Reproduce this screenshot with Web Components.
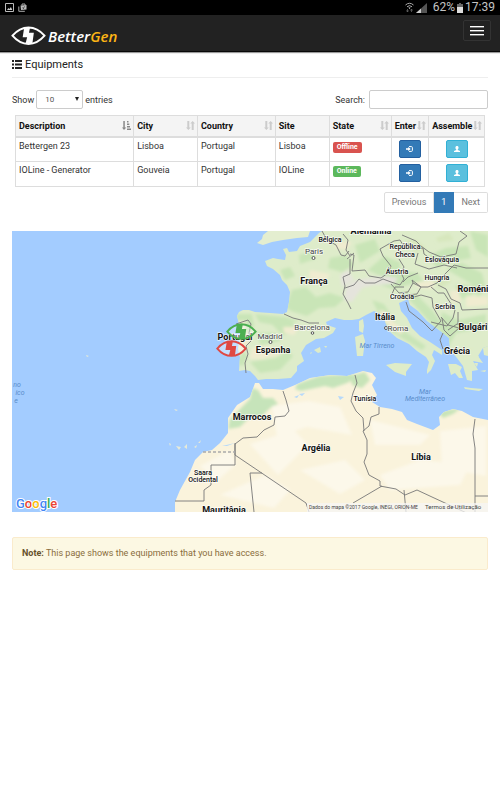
<!DOCTYPE html>
<html lang="en">
<head>
<meta charset="utf-8">
<meta name="viewport" content="width=device-width, initial-scale=1">
<title>BetterGen - Equipments</title>
<style>
  body { margin: 0; background: #fff; color: #333; font: 9px/12px Roboto, "Liberation Sans", sans-serif; }
  main { padding: 0 12px; }
</style>
</head>
<body>
<status-bar></status-bar>
<app-navbar></app-navbar>
<main>
  <page-heading>Equipments</page-heading>
  <table-controls></table-controls>
  <equipment-table></equipment-table>
  <page-list></page-list>
  <equipment-map></equipment-map>
  <note-box><b>Note:</b> This page shows the equipments that you have access.</note-box>
</main>
<script>
const define = (name, markup) => {
  const template = document.createElement('template');
  template.innerHTML = markup;
  customElements.define(name, class extends HTMLElement {
    constructor() {
      super();
      this.attachShadow({ mode: 'open' }).append(template.content.cloneNode(true));
    }
  });
};

define('status-bar', `
<style>
  :host { display: flex; align-items: center; height: 15px; padding: 0 5px; background: #000; color: #c4c4c4; font-size: 12px; line-height: 15px; }
  svg { display: block; }
  .left, .right { display: flex; align-items: center; gap: 4px; }
  .right { margin-left: auto; gap: 2px; }
  .level { margin-left: 4px; }
</style>
<div class="left">
  <svg width="9" height="9" viewBox="0 0 9 9"><path d="M.5.5h8v8h-8z" fill="none" stroke="#bbb"/><path d="M2 7l1.5-2 1 1 1.4-2L7.300 7z" fill="#ccc"/></svg>
  <svg width="9" height="9" viewBox="0 0 9 9"><path d="M2.500 2.500L8.500 2v4.500L3 7z" fill="#bbb"/><path d="M4 2.500V1h3v1.300M.8 3.500V8.300h6" fill="none" stroke="#aaa"/><path d="M4.500 4.500L6 5.500M6.700 3.300L5 6" stroke="#333" stroke-width=".7"/></svg>
</div>
<div class="right">
  <svg width="9" height="11" viewBox="0 0 9 11"><path d="M.5 3Q4.500-.5 8.500 3M2 4.800Q4.500 2.500 7 4.800" fill="none" stroke="#aaa"/><path d="M3.500 5.500h2L4.500 7z" fill="#fff"/><path d="M2.500 7v3M1.500 8.500l1 1.500 1-1.500M6.500 10V7M5.500 8.500l1-1.500 1 1.500" fill="none" stroke="#666" stroke-width=".8"/></svg>
  <svg width="11" height="10" viewBox="0 0 11 10"><path d="M0 10L11 0v10z" fill="#555"/><path d="M0 10l5-4.500V10z" fill="#ccc"/></svg>
  <span class="level">62%</span>
  <svg width="6" height="10" viewBox="0 0 6 10"><path d="M0 1h2V0h2v1h2v9H0z" fill="#666"/><path d="M0 4h6v6H0z" fill="#ddd"/></svg>
  <span>17:39</span>
</div>`);

define('bolt-eye', `
<style>:host { display: block; } svg { display: block; width: 100%; }</style>
<svg viewBox="0 0 36 20" fill="none" stroke="currentColor"><path d="M1.500 10C7 3.500 12 1.500 18 1.500S29 3.500 34.500 10C29 16.500 24 18.500 18 18.500S7 16.500 1.500 10z" stroke-width="2"/><path d="M13.500 2h6l-1 5h5L22 18h-7l1.600-6.300H12z" fill="currentColor" stroke="none"/></svg>`);

define('app-navbar', `
<style>
  :host { display: flex; align-items: center; justify-content: space-between; height: 36px; padding: 0 9px 0 11px; background: #222; border-bottom: 1px solid #080808; box-shadow: 0 1px 1px #999; }
  a { display: flex; align-items: center; gap: 2px; padding-top: 6px; color: #fff; text-decoration: none; font: italic 600 15px/20px "Open Sans", "Noto Sans", sans-serif; }
  bolt-eye { width: 35px; }
  span span { color: #fdb515; }
  button { display: flex; flex-direction: column; gap: 3px; margin-bottom: 6px; padding: 5px 6px; background: none; border: 1px solid #333; border-radius: 2px; }
  i { width: 14px; height: 1px; background: #fff; box-shadow: 0 1px #777; }
</style>
<a href="#"><bolt-eye></bolt-eye><span>Better<span>Gen</span></span></a>
<button type="button" aria-label="Toggle navigation"><i></i><i></i><i></i></button>`);

define('page-heading', `
<style>
  :host { display: block; border-bottom: 1px solid #eee; color: #222; }
  h1 { display: flex; align-items: center; gap: 3px; margin: 0; padding: 5px 0 5px; font: 400 11px/15px Roboto, sans-serif; }
</style>
<h1><svg width="10" height="9" viewBox="0 0 10 9" fill="#222"><path d="M0 0h2v2H0zM3 0h7v2H3zM0 3.500h2v2H0zM3 3.500h7v2H3zM0 7h2v2H0zM3 7h7v2H3z"/></svg><span><slot></slot></span></h1>`);

define('table-controls', `
<style>
  :host { display: flex; justify-content: space-between; padding-top: 12px; }
  div { display: flex; align-items: center; gap: 2px; }
  .search { gap: 4px; }
  select, input { box-sizing: border-box; height: 19px; margin: 0; border: 1px solid #ccc; border-radius: 2px; background: #fff; color: #555; font: 8px/12px Roboto, sans-serif; }
  .pick { position: relative; display: block; }
  select { width: 47px; padding: 0 8px; appearance: none; }
  svg { position: absolute; right: 4px; top: 7px; pointer-events: none; }
  input { width: 119px; padding: 0 4px; }
</style>
<div><label for="length">Show</label><span class="pick"><select id="length"><option>10</option><option>25</option><option>50</option></select><svg width="4" height="4" viewBox="0 0 4 4"><path d="M0 0h4L2 4z" fill="#222"/></svg></span><label for="length">entries</label></div>
<div class="search"><label for="search">Search:</label><input id="search" type="search"></div>`);

define('sort-icon', `
<style>:host { display: block; } svg { display: block; } .asc { display: none; } :host([asc]) .asc { display: block; } :host([asc]) .both { display: none; }</style>
<svg class="both" width="9" height="9" viewBox="0 0 9 9" fill="#ccc"><path d="M1.300 0h2v6.500h1.500L2.300 9 0 6.500h1.300zM5.700 9h2V2.500H9L6.700 0 4.200 2.500h1.500z"/></svg>
<svg class="asc" width="9" height="9" viewBox="0 0 9 9" fill="#888"><path d="M1.300 0h1.500v6.500h1.500L2 9 0 6.500h1.300zM5 0h1.500v1.500H5zM5 2.500h2.300V4H5zM5 5h3v1.500H5zM5 7.500h4V9H5z"/></svg>`);

const head = (text, asc = '') => `<th scope="col"><div><span>${text}</span><sort-icon ${asc}></sort-icon></div></th>`;
const row = (name, city, site, state) => `<tr><td>${name}</td><td>${city}</td><td>Portugal</td><td>${site}</td>
  <td><mark class="${state.toLowerCase()}">${state}</mark></td>
  <td class="act"><button type="button" class="enter" aria-label="Enter ${name}"><svg width="7" height="6" viewBox="0 0 7 6"><path d="M3 .6h2.400q1 0 1 1v2.800q0 1-1 1H3" fill="none" stroke="#fff"/><path d="M0 2.200h2.200V1L4.700 3 2.200 5V3.800H0z" fill="#fff"/></svg></button></td>
  <td class="act"><button type="button" class="assemble" aria-label="Assemble ${name}"><svg width="6" height="6" viewBox="0 0 6 6" fill="#fff"><path d="M3 0c2 0 1.800 2.500.8 3.300v.8L6 5v1H0V5l2.200-.9v-.8C1.200 2.500 1 0 3 0z"/></svg></button></td></tr>`;

define('equipment-table', `
<style>
  :host { display: block; padding: 6px 3px 0; }
  table { width: 100%; table-layout: fixed; border-collapse: collapse; border: 1px solid #ddd; }
  th, td { box-sizing: border-box; padding: 0 3px; border: 1px solid #ddd; text-align: left; font-weight: 400; }
  th { height: 21px; padding-right: 2px; background: #f4f4f4; border-bottom-width: 2px; color: #111; font-weight: 700; }
  th div { display: flex; align-items: center; justify-content: space-between; white-space: nowrap; }
  td { height: 25px; padding-top: 2px; padding-bottom: 4px; vertical-align: top; }
  .act { padding: 2px 0 3px; text-align: center; }
  mark { display: inline-block; padding: 0 4px; border-radius: 2px; color: #fff; font-size: 7px; font-weight: 700; line-height: 11px; }
  .offline { background: #d9534f; } .online { background: #5cb85c; }
  button { display: inline-flex; align-items: center; justify-content: center; box-sizing: border-box; width: 22px; height: 18px; padding: 0; border: 1px solid #2360a0; border-radius: 2px; background: #337ab7; vertical-align: top; }
  .assemble { background: #5bc0de; border-color: #31b0d5; }
</style>
<table>
  <colgroup><col style="width:25.200%"><col style="width:13.600%"><col style="width:16.600%"><col style="width:11.500%"><col style="width:13.200%"><col style="width:8%"><col></colgroup>
  <thead><tr>${head('Description', 'asc')}${head('City')}${head('Country')}<th scope="col">Site</th>${head('State')}${head('Enter')}${head('Assemble')}</tr></thead>
  <tbody>${row('Bettergen 23', 'Lisboa', 'Lisboa', 'Offline')}${row('IOLine - Generator', 'Gouveia', 'IOLine', 'Online')}</tbody>
</table>`);

define('page-list', `
<style>
  :host { display: block; padding-top: 5px; }
  nav { display: flex; justify-content: flex-end; }
  a { padding: 4px 7px; border: 1px solid #ddd; border-left-width: 0; color: #777; text-decoration: none; line-height: 11px; }
  a:first-child { border-left-width: 1px; border-radius: 2px 0 0 2px; }
  a:last-child { border-radius: 0 2px 2px 0; }
  .on { background: #337ab7; border-color: #337ab7; color: #fff; }
</style>
<nav aria-label="Pages"><a href="#">Previous</a><a href="#" class="on" aria-current="page">1</a><a href="#">Next</a></nav>`);

/* Map geometry is kept in one shared coordinate space; labels are placed over the land shapes. */
const label = (x, y, text, kind = '') => `<text x="${x}" y="${y}" class="${kind}">${text}</text>`;
const eye = (x, y, color) => `<g transform="translate(${x} ${y}) scale(.86)" fill="none" stroke="${color}"><path d="M1.500 10C7 3.500 12 1.500 18 1.500S29 3.500 34.500 10C29 16.500 24 18.500 18 18.500S7 16.500 1.500 10z" fill="#fff" fill-opacity=".35" stroke-width="2.200"/><path d="M12.500 2h7l-1 5h5L22 18h-7l1.600-6.300H11z" fill="${color}" stroke="none"/></g>`;
define('equipment-map', `
<style>
  :host { display: block; padding-top: 18px; }
  svg { display: block; width: 100%; }
  text { font: 700 9px Roboto, sans-serif; fill: #111; text-anchor: middle; paint-order: stroke; stroke: #fff; stroke-width: 1.500px; stroke-opacity: .75; }
  .s { font-size: 7px; font-weight: 500; }
  .c { font-size: 8px; font-weight: 400; fill: #444; }
  .w { font-size: 7px; font-weight: 400; font-style: italic; fill: #5a8ccb; stroke: none; }
  .t { font-size: 6px; font-weight: 400; fill: #444; stroke: none; text-anchor: start; }
  .d { font-size: 5px; }
  .g { font: 500 13px Roboto, sans-serif; text-anchor: start; stroke-width: 2px; stroke-opacity: 1; }
</style>
<svg viewBox="12 231 476 281" role="img" aria-label="Map of equipments">
<defs>
<clipPath id="eu"><path id="eup" d="M322 231l-3 2-4 4-5 5-10 4-3 5-8 1-2-4-4 1 3 6-1 5-7-1-5-1-8 3 2 5 6 3 7 6 2 5 5 5 3 7-1 10-2 10-4 2-13-1-15-1-6-2-6 0-4 2-2 4 2 8 2 7-1 6-2 12 2 8-1 14 6-1 5 1 5 5 3 4 8-1 12 0 13-1 6-7 0-5 7-5-3-8 5-8 10-6 8-1 9-5 3-5-9-3-1-3 9-4 9 2 8 0 7-1 7-4 8-4 6 3 4 4 2 6 3 7 8 7 12 6 8 7 9 6 3 5-2 8 0 4 4-4 4-9-3-6 2-5 8 5 0-5-12-8-10-6-8-8-5-10-6-7-2-8 9-4 2 6 8 6 9 10 16 12 6 5 1 12 7 8 6 8 4 14 5 1 0-10 6-1-5-9 10 2-5-7 5-8 6-2 8 0 6-3V231z"/></clipPath>
<clipPath id="af"><path id="afp" d="M175 512v-10l5-12 10-18 5-12 8-8 9-2 8-7 8-10 0-15 9-13 13-8 5-14 4 0 4 6 10 0 10 1 12-5 15-7 20-3 17 1 16-5 9 2 4 5-4 7 5 10-5 7 8 5 12 2 10 3 5 8 10 4 16 6 7-5-1-8 5-5 9-3 9 2 11 6 15 3V512z"/></clipPath>
<filter id="soft"><feGaussianBlur stdDeviation="1.500"/></filter>
</defs>
<path fill="#a3ccff" d="M12 231h476v281H12z"/>
<path fill="#e4eed0" d="M257 243l5-4 1-4 5-4h42l-2 6-11 1-14 2-11 2-9 3z"/>
<use href="#eup" fill="#deecca"/><use href="#afp" fill="#faf3dc"/>
<g clip-path="url(#eu)"><g filter="url(#soft)">
<path fill="#c9e5b7" d="M292 290l14-3 10 10 14-4 15 5-10 9-16 1-12 8-16-5-5-4zM299 255l14-4 2 8-15 5zM330 258l16-3 8 10-12 7-14-4zM280 270l10-3 5 9-10 4zM236 314l16 0 2 12-8 14-8-6zM255 314l30 3 14 4-20 5-20-4zM272 324l20-2 6 10-16 3zM256 333l20 0 5 8-20 4zM239 348l9 8-5 10-7-2zM250 362l26-4 12-8 5 6-13 14-20 3zM355 245l20-6 5 12-20 12zM384 256l16 6 0 8-20 6-12-6zM386 270l32 3 5 8-30 8-18-6zM400 290l18 6 15 15 12 16-8 3-22-24zM372 300l12 4 14 22 16 12 12 8-4 4-20-12-16-10zM428 256l18-8 22-2 3 12-22 4-12 6zM446 269l16-6 20 10 4 16-8 8-8-14-14-8zM442 312l16 8 10-2 18-4v14l-30 5-8 15-9-8zM455 285l14 0 6 8-15 7zM470 231l18 4v22l-12-7z"/>
<path fill="#f0ecd0" d="M238 321l8 0-1 12 8 1-6 12-9 12zM252 348l18-2 12 8-20 5-13 0zM283 327l17 0-6 8-10-2zM310 270l20 4-5 9-16-5zM338 242l14 0-6 8-12-2zM379 310l5 1 20 21-4 2-15-11zM450 291l8-1 4 11-10 2zM466 296l22 1v8l-22 2zM414 283l24-4-6 10-13-1z"/>
<path fill="#e5e4dc" d="M346 286l10-6 14-2 16-2 12 2-4 6-20 1-12 3-10 14-8-2zM340 275l8-5 6 10-12 7z"/>
<path fill="#d7e7bd" d="M404 240l12 0 10 8-10 5zM436 238l13-5 5 7-16 2zM430 278l12-2 10 5-12 8z"/>
</g></g>
<g clip-path="url(#af)"><g filter="url(#soft)">
<path fill="#c6e4ba" d="M252 388l6 2 5 8 10 0 5 6-8 4-8 8-14 3-8 8-12 2 2-10 12-12 8-8zM297 384l22-8 32-2 8 2-12 7-14 5-8-2-24 5-6-2z"/>
<path fill="#c8e4b8" d="M438 412l8-2 15-2-8 6-10 4zM350 376l15-4 5 8-8 8-10-3z"/>
<path fill="#fcf8ea" d="M272 406l36-5 32 6 12 28-45-8-30 10zM200 466l30-16 6 14-20 18zM250 444l44-14 14 15-30 30zM370 420l40 10 20 5-10 10-45 0zM380 475l40-15 50 5-10 20-70 5zM440 431l46-5v50l-44-8zM220 495l45-20 25 15-16 18zM300 470l45-10 20 20-25 14z"/>
</g></g>
<g fill="#dfecc8"><path d="M359 321l4-2 1 7-1 7-4-2zM355 337l8-3 2 7-2 15-6 0-1-9zM386 365l9-2 17 1-6 8 0 4-11-4zM448 364l8 0 6 3-2 4 3 7-4 0-4-5-4 2zM464 387l7 1 12 1-4 2-14-2z"/><path d="M314 350l6-3 1 5-3 1zM310 353l2-1-1 2zM324 346l3 0-1 2zM469 347l5 0-2 4zM474 363l4 0-1 4zM483 348l5-2v10l-4-1zM476 355l3 1-2 3zM480 371l6-1-1 2zM467 376l3 0-1 2z"/></g>
<path fill="#e6ead8" d="M169 443l2 1-1 2zM176 446l5 1-2 3zM184 447l3-3 0 5zM194 447l3-2-1 3zM198 443l3-3-1 3zM174 409l4 1-2 1zM86 355l3 1-2 1zM113 363l3 1zM118 364l3 1zM167 451l2 0z"/>
<path fill="#b6d9fa" d="M294 397l5-2-2 3zM299 394l6-1-3 3zM338 396l6 1-4 3zM222 446l13-3-8 3z"/>
<g fill="none" stroke="#777" stroke-width=".9" stroke-linejoin="round">
<path d="M284 314l9 4 8 2 8 3 10 0M236 324l12-4 3 4-2 9 2 8-5 5 2 8-3 9 1 10M322 231l5 9 9 5 5 10 4 1 4-5M350 256l-4-6 2-10-5-6M350 259l0 15-7 3 2 9-2 8 5 9 3 6"/>
<path d="M350 254l4 1-2 16 13-1 4 6 12 2 7-5 3-7-8-10-3-7 14-8 6-1 3 5 8-1 5 5 7-1 1 6 7 5 11 3M345 288l9-3 5-6 6 4 10 0 8-4 8 3 9 3 4-6-3-6 3-6-5-8M404 287l-9 0-3 7M391 284l8 9 9-1 5-9-1-3M413 283l8 4 7 0 9-4 8-9 9-9 12 3 22 0M421 287l-4 7-10 1-8 4M402 235l14 6 5 5 8 6 12 5 15-3 3-12 8-6-7-5M418 253l-3 11 14 5 15-4 13 3M412 280l9 7M407 299l14-4 11 3 1 9 8 14-9 10-9-9-14-11-3-9M431 287l7 6 6 0 11 17-2 8-6 8-16-4M438 285l8 4 5 10 9 4 2 7 26-1M441 317l7 8 11 3-9 8-6-6-2-12M443 333l-3 7 3 9M448 330l9-6 17 4 14-4M458 324l0-12M347 259l7-6M418 273l-10 4-5 5"/>
<path d="M283 391l3 9 3 11-4 5-10 1-1 8-10 5-7 7-14 1-8 6v21h-24v20l-7 5v11h-29M235 455l71 48 3 9M235 455l0-12M254 512l-4-39h12M355 375l2 8-4 10-2 8 5 10 7 7 1 13M379 407v7l-8 3-2 9-6 5 4 9 0 14-3 8 5 13 11 6 0 5 16 3 9 6 12-5 15 7 39 18M382 486l-29 17M404 490l2 22M475 419l-2 15 2 14v64M475 496h13"/>
<path d="M203 452h32" stroke="#aaa" stroke-width="1.500" stroke-dasharray="3 2"/>
</g>
<g fill="#fff" stroke="#555"><circle cx="313.500" cy="258" r="1.500"/><circle cx="270.500" cy="342" r="1.500"/><circle cx="386" cy="328" r="1.500"/><circle cx="312.500" cy="333" r="1.300"/></g>
${label(371, 234, 'Alemanha')}${label(330, 242, 'Bélgica', 's')}${label(314, 254, 'Paris', 'c')}${label(314, 284, 'França')}
${label(405, 249, 'República', 's')}${label(405, 257, 'Checa', 's')}${label(442, 262, 'Eslováquia', 's')}${label(397, 274, 'Áustria', 's')}${label(437, 280, 'Hungria', 's')}${label(402, 299, 'Croácia', 's')}${label(445, 309, 'Serbia', 's')}
${label(473, 292, 'Roméni')}${label(473, 330, 'Bulgári')}${label(385, 320, 'Itália')}${label(398, 331, 'Roma', 'c')}${label(457, 354, 'Grécia')}
${label(312, 330, 'Barcelona', 'c')}${label(270, 339, 'Madrid', 'c')}${label(273, 353, 'Espanha')}${label(235, 340, 'Portugal')}
${label(252, 420, 'Marrocos')}${label(316, 451, 'Argélia')}${label(421, 460, 'Líbia')}${label(365, 401, 'Tunísia', 's')}${label(203, 475, 'Saara', 's')}${label(203, 482, 'Ocidental', 's')}${label(224, 513, 'Mauritânia')}
${label(377, 348, 'Mar Tirreno', 'w')}${label(425, 394, 'Mar', 'w')}${label(425, 401, 'Mediterrâneo', 'w')}${label(17, 387, 'no', 'w')}${label(20, 395, 'ico', 'w')}${label(16, 403, 'e', 'w')}
${eye(226, 323, '#4caf50')}${eye(216, 340, '#e04843')}
<path fill="#f5f5f5" fill-opacity=".75" d="M307 503h181v9H307z"/>
${label(309, 509, 'Dados do mapa ©2017 Google, INEGI, ORION-ME', 't d')}${label(425, 509, 'Termos de Utilização', 't')}
<text x="16" y="508" class="g"><tspan fill="#4285f4">G</tspan><tspan fill="#ea4335">o</tspan><tspan fill="#fbbc05">o</tspan><tspan fill="#4285f4">g</tspan><tspan fill="#34a853">l</tspan><tspan fill="#ea4335">e</tspan></text>
</svg>`);

define('note-box', `
<style>
  :host { display: block; margin-top: 25px; padding: 9px; border: 1px solid #faebcc; border-radius: 2px; background: #fcf8e3; color: #8a6d3b; line-height: 13px; }
  ::slotted(b) { color: #66512c; }
</style>
<slot></slot>`);
</script>
</body>
</html>
